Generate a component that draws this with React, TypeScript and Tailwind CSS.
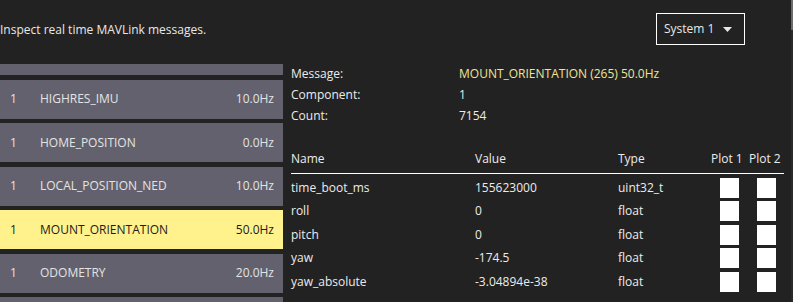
import React from 'react';

const MESSAGES = [
  { comp: '1', name: 'HIGHRES_IMU', hz: '10.0Hz' },
  { comp: '1', name: 'HOME_POSITION', hz: '0.0Hz' },
  { comp: '1', name: 'LOCAL_POSITION_NED', hz: '10.0Hz' },
  { comp: '1', name: 'MOUNT_ORIENTATION', hz: '50.0Hz', selected: true },
  { comp: '1', name: 'ODOMETRY', hz: '20.0Hz' },
];

const FIELDS = [
  { name: 'time_boot_ms', value: '155623000', type: 'uint32_t' },
  { name: 'roll', value: '0', type: 'float' },
  { name: 'pitch', value: '0', type: 'float' },
  { name: 'yaw', value: '-174.5', type: 'float' },
  { name: 'yaw_absolute', value: '-3.04894e-38', type: 'float' },
];

function MessageRow({ comp, name, hz, selected }: { comp: string; name: string; hz: string; selected?: boolean }) {
  return (
    <div
      className={`h-[39px] shrink-0 flex items-center pl-[10px] pr-[9px] ${
        selected ? 'bg-[#fff28c] text-[#1c1c1c]' : 'bg-[#62616d] text-[#e4e4e4]'
      }`}
    >
      <span className="w-[30px]">{comp}</span>
      <span className="flex-1">{name}</span>
      <span>{hz}</span>
    </div>
  );
}

export default function App() {
  return (
    <div
      className="w-[793px] h-[302px] bg-[#222222] overflow-hidden flex text-[12px] text-[#ececec]"
      style={{ fontFamily: '"Open Sans", "Liberation Sans", sans-serif' }}
    >
      <div className="flex-1 flex flex-col">
        {/* header */}
        <div className="h-[64px] shrink-0 flex items-start justify-between pr-[46px]">
          <p className="mt-[21px] text-[#e8e8e8]">Inspect real time MAVLink messages.</p>
          <button className="mt-[13px] h-[32px] w-[89px] border border-white flex items-center pl-[7px] gap-[9px] text-[#e8e8e8]">
            <span>System 1</span>
            <svg width="9" height="5" viewBox="0 0 9 5">
              <path d="M0 0 L9 0 L4.5 5 Z" fill="#e8e8e8" />
            </svg>
          </button>
        </div>

        <div className="flex flex-1 min-h-0">
          {/* message list */}
          <div className="w-[283px] shrink-0 flex flex-col gap-[4.5px] overflow-hidden">
            <div className="h-[11px] shrink-0 bg-[#62616d]" />
            {MESSAGES.map((m) => (
              <MessageRow key={m.name} {...m} />
            ))}
            <div className="h-[39px] shrink-0 bg-[#62616d]" />
          </div>

          {/* details */}
          <div className="flex-1 pl-[8px] pr-[7px]">
            <div className="grid grid-cols-[168px_1fr] leading-[21px] -mt-px">
              <span>Message:</span>
              <span className="text-[#eee596]">MOUNT_ORIENTATION (265) 50.0Hz</span>
              <span>Component:</span>
              <span>1</span>
              <span>Count:</span>
              <span>7154</span>
            </div>

            <div className="mt-[23px] grid grid-cols-[184px_143px_93px_38px_1fr] h-[25px] items-start leading-[20px] border-b border-white">
              <span>Name</span>
              <span>Value</span>
              <span>Type</span>
              <span>Plot 1</span>
              <span>Plot 2</span>
            </div>

            <div className="mt-[2px] flex flex-col">
              {FIELDS.map((f) => (
                <div key={f.name} className="grid grid-cols-[184px_143px_93px_38px_1fr] h-[23.5px] items-center">
                  <span>{f.name}</span>
                  <span>{f.value}</span>
                  <span>{f.type}</span>
                  <span className="pl-[9px]">
                    <span className="block w-[19px] h-[20px] bg-white" />
                  </span>
                  <span className="pl-[8px]">
                    <span className="block w-[19px] h-[20px] bg-white" />
                  </span>
                </div>
              ))}
            </div>
          </div>
        </div>
      </div>

      {/* scrollbar */}
      <div className="w-[2px] shrink-0 flex flex-col bg-[#2a2a2a]">
        <div className="h-[30px] bg-[#6b6b6b]" />
      </div>
    </div>
  );
}
